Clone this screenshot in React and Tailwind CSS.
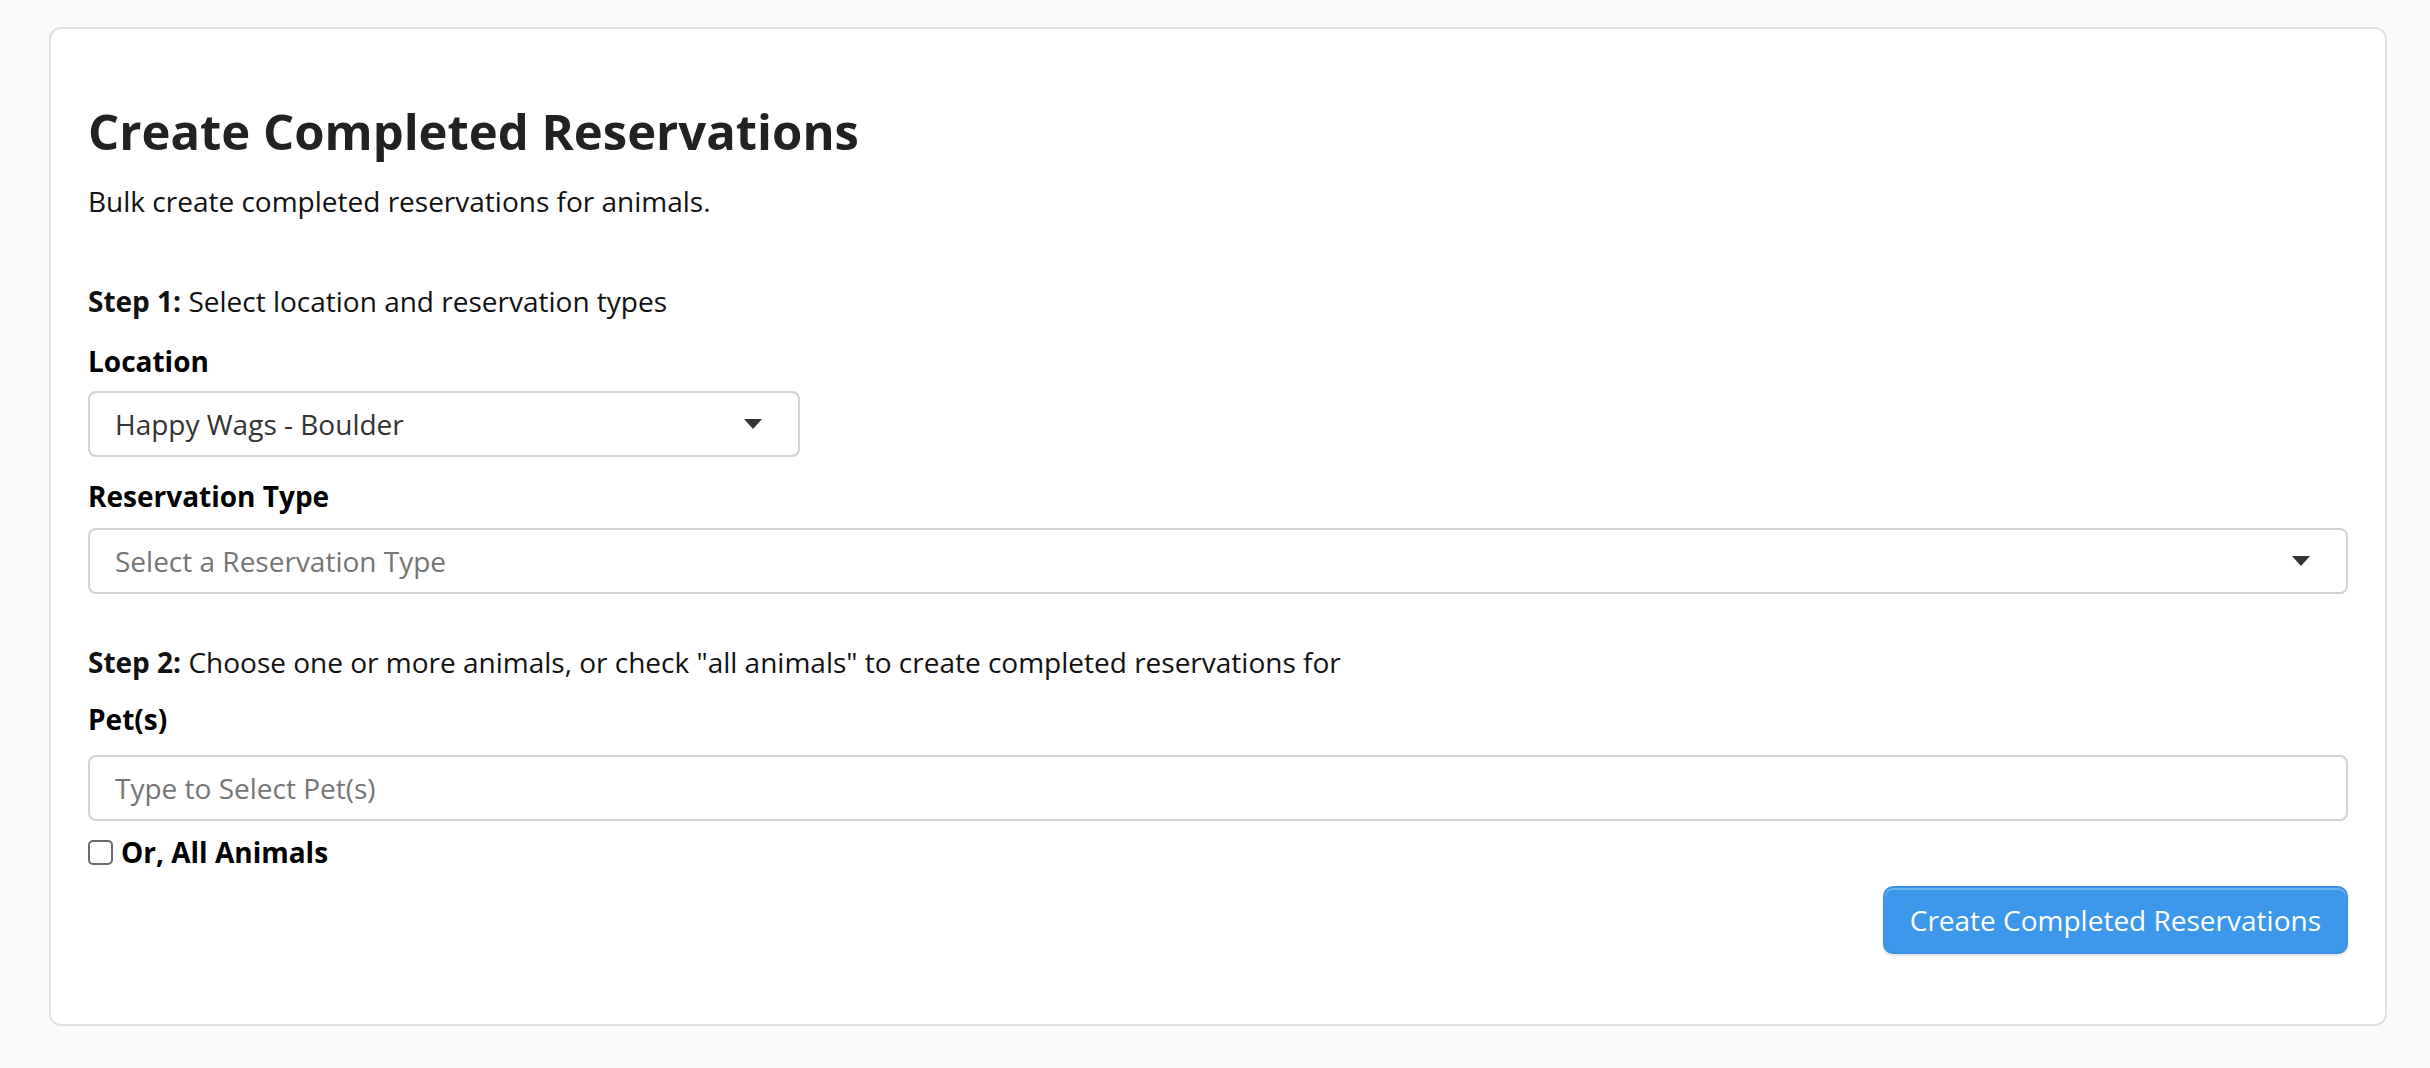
const font = { fontFamily: '"Open Sans", "Noto Sans", Arial, sans-serif' };

function Caret() {
  return (
    <svg width="18" height="10" viewBox="0 0 18 10" className="shrink-0">
      <path d="M0 0 L18 0 L9 10 Z" fill="#333333" />
    </svg>
  );
}

function FakeSelect({ value, placeholder, className = '' }) {
  return (
    <div className={`h-[66px] flex items-center justify-between pl-[25px] pr-[36px] bg-white border-2 border-[#d2d2d2] rounded-[8px] ${className}`}>
      <span className={value ? 'text-[#333333]' : 'text-[#757575]'}>{value || placeholder}</span>
      <Caret />
    </div>
  );
}

export default function App() {
  return (
    <div className="min-h-screen bg-[#fafafa] pl-[49px] pr-[43px] pt-[27px] pb-[40px] text-[28px] leading-[40px] text-[#111111]" style={font}>
      <div className="bg-white border-2 border-[#e0e0e0] rounded-[12px] px-[37px] pt-[76px] pb-[70px]">
        {/* Heading */}
        <h1 className="text-[49px] leading-[53px] font-bold text-[#222222]">Create Completed Reservations</h1>
        <p className="mt-[23px]">Bulk create completed reservations for animals.</p>

        {/* Step 1 */}
        <p className="mt-[60px]"><span className="font-bold">Step 1:</span> Select location and reservation types</p>
        <label className="block mt-[20px] mb-[10px] font-bold text-black">Location</label>
        <FakeSelect value="Happy Wags - Boulder" className="w-[712px]" />

        <label className="block mt-[19px] mb-[12px] font-bold text-black">Reservation Type</label>
        <FakeSelect placeholder="Select a Reservation Type" />

        {/* Step 2 */}
        <p className="mt-[48px]"><span className="font-bold">Step 2:</span> Choose one or more animals, or check "all animals" to create completed reservations for</p>
        <label className="block mt-[17px] mb-[16px] font-bold text-black">Pet(s)</label>
        <input
          type="text"
          placeholder="Type to Select Pet(s)"
          className="w-full h-[66px] px-[25px] bg-white border-2 border-[#d2d2d2] rounded-[8px] text-[#333333] placeholder:text-[#757575] outline-none"
        />
        <label className="flex items-center gap-[8px] mt-[11px] font-bold text-black">
          <span className="w-[25px] h-[25px] border-2 border-[#6b6b6b] rounded-[5px] bg-white shrink-0" />
          Or, All Animals
        </label>

        <div className="flex justify-end mt-[14px]">
          <button className="h-[68px] px-[25px] rounded-[10px] bg-[#3d98ec] border-2 border-[#3b93e4] text-white shadow-[inset_0_2px_0_rgba(255,255,255,0.25),0_2px_3px_rgba(0,0,0,0.12)]">
            Create Completed Reservations
          </button>
        </div>
      </div>
    </div>
  );
}
